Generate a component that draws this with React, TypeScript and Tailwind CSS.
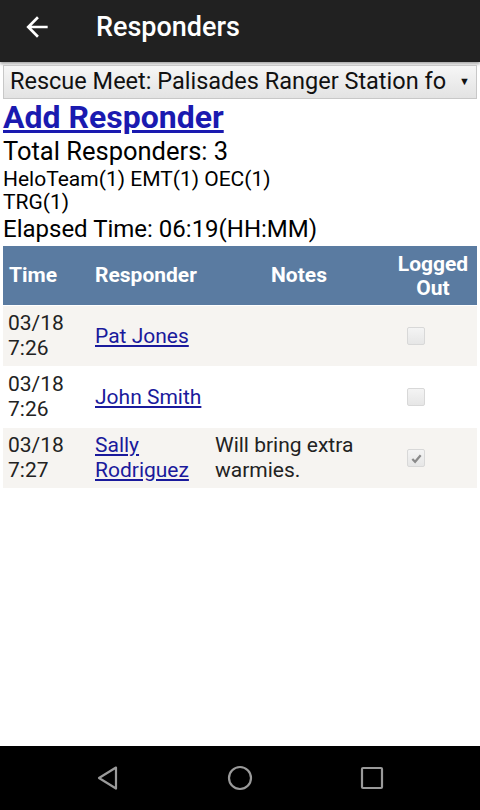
import React from "react";

const rows = [
  { date: "03/18", time: "7:26", first: "Pat Jones", second: "", notes: [], out: false },
  { date: "03/18", time: "7:26", first: "John Smith", second: "", notes: [], out: false },
  { date: "03/18", time: "7:27", first: "Sally", second: "Rodriguez", notes: ["Will bring extra", "warmies."], out: true },
];

function Box({ checked }: { checked: boolean }) {
  return (
    <div className="flex h-[18px] w-[18px] items-center justify-center rounded-[2px] border border-[#d8d8d8] bg-gradient-to-b from-[#f4f4f4] to-[#e6e6e6]">
      {checked && (
        <svg width="13" height="13" viewBox="0 0 14 14">
          <path d="M2.5 7.5 L5.5 10.5 L11.5 3.5" fill="none" stroke="#8a8a8a" strokeWidth="2.4" />
        </svg>
      )}
    </div>
  );
}

export default function App() {
  return (
    <div className="flex h-[810px] w-[480px] flex-col bg-white text-black" style={{ fontFamily: "Roboto, 'Liberation Sans', sans-serif" }}>
      <div className="flex h-[62px] shrink-0 items-center bg-[#212121] shadow-[0_2px_3px_rgba(0,0,0,0.35)]">
        <svg width="32" height="32" viewBox="0 0 24 24" className="ml-[21px] mb-[8px]">
          <path d="M20 11H7.83l5.59-5.59L12 4l-8 8 8 8 1.41-1.41L7.83 13H20v-2z" fill="#fff" />
        </svg>
        <div className="ml-[43px] mb-[8px] text-[27px] font-medium text-white">Responders</div>
      </div>

      <div className="mx-[3px] mt-[3px] flex h-[34px] items-center border border-[#c8c8c8] bg-gradient-to-b from-[#f6f6f6] to-[#e3e3e3] pl-[6px] pr-[6px]">
        <span className="min-w-0 flex-1 whitespace-nowrap text-[23.5px] leading-none text-[#111]">Rescue Meet: Palisades Ranger Station fo</span>
        <span className="ml-[4px] shrink-0 text-[11px] text-[#111]">▼</span>
      </div>

      <div className="px-[3px]">
        <a href="#" className="block h-[36px] text-[32px] font-bold leading-[36px] text-[#1a1ab0] underline">Add Responder</a>
        <div className="h-[32px] text-[25.5px] leading-[32px]">Total Responders: 3</div>
        <div className="h-[24px] text-[21px] leading-[24px]">HeloTeam(1) EMT(1) OEC(1)</div>
        <div className="h-[22px] text-[21px] leading-[22px]">TRG(1)</div>
        <div className="h-[32px] text-[24px] leading-[32px]">Elapsed Time: 06:19(HH:MM)</div>
      </div>

      <table className="mx-[3px] w-[474px] border-separate border-spacing-y-[1px] text-[21px]">
        <thead>
          <tr className="bg-[#5a7ba1] text-white">
            <th className="h-[59px] w-[86px] pl-[6px] text-left font-bold">Time</th>
            <th className="w-[120px] pl-[6px] text-left font-bold">Responder</th>
            <th className="w-[180px] text-center font-bold">Notes</th>
            <th className="text-center font-bold leading-[24px]">Logged<br />Out</th>
          </tr>
        </thead>
        <tbody>
          {rows.map((r, i) => (
            <tr key={i} className={i % 2 === 0 ? "bg-[#f6f4f1]" : "bg-white"}>
              <td className="h-[60px] pl-[5px] leading-[25px] text-[#222]">
                {r.date}
                <br />
                {r.time}
              </td>
              <td className="pl-[6px] leading-[25px]">
                <a href="#" className="text-[#1a1a9c] underline">
                  {r.first}
                  {r.second && <br />}
                  {r.second}
                </a>
              </td>
              <td className="pl-[6px] leading-[25px] text-[#222]">
                {r.notes.map((n, j) => (
                  <div key={j}>{n}</div>
                ))}
              </td>
              <td className="pl-[18px]">
                <Box checked={r.out} />
              </td>
            </tr>
          ))}
        </tbody>
      </table>

      <div className="flex-1" />

      <div className="flex h-[64px] shrink-0 items-center justify-center gap-[106px] bg-black">
        <svg width="26" height="28" viewBox="0 0 26 28">
          <path d="M21 3.5 L4 14 L21 24.5 Z" fill="none" stroke="#9a9a9a" strokeWidth="2.2" strokeLinejoin="round" />
        </svg>
        <svg width="26" height="26" viewBox="0 0 26 26">
          <circle cx="13" cy="13" r="11" fill="none" stroke="#9a9a9a" strokeWidth="2.2" />
        </svg>
        <svg width="26" height="26" viewBox="0 0 26 26">
          <rect x="3" y="3" width="20" height="20" rx="1" fill="none" stroke="#9a9a9a" strokeWidth="2.2" />
        </svg>
      </div>
    </div>
  );
}
